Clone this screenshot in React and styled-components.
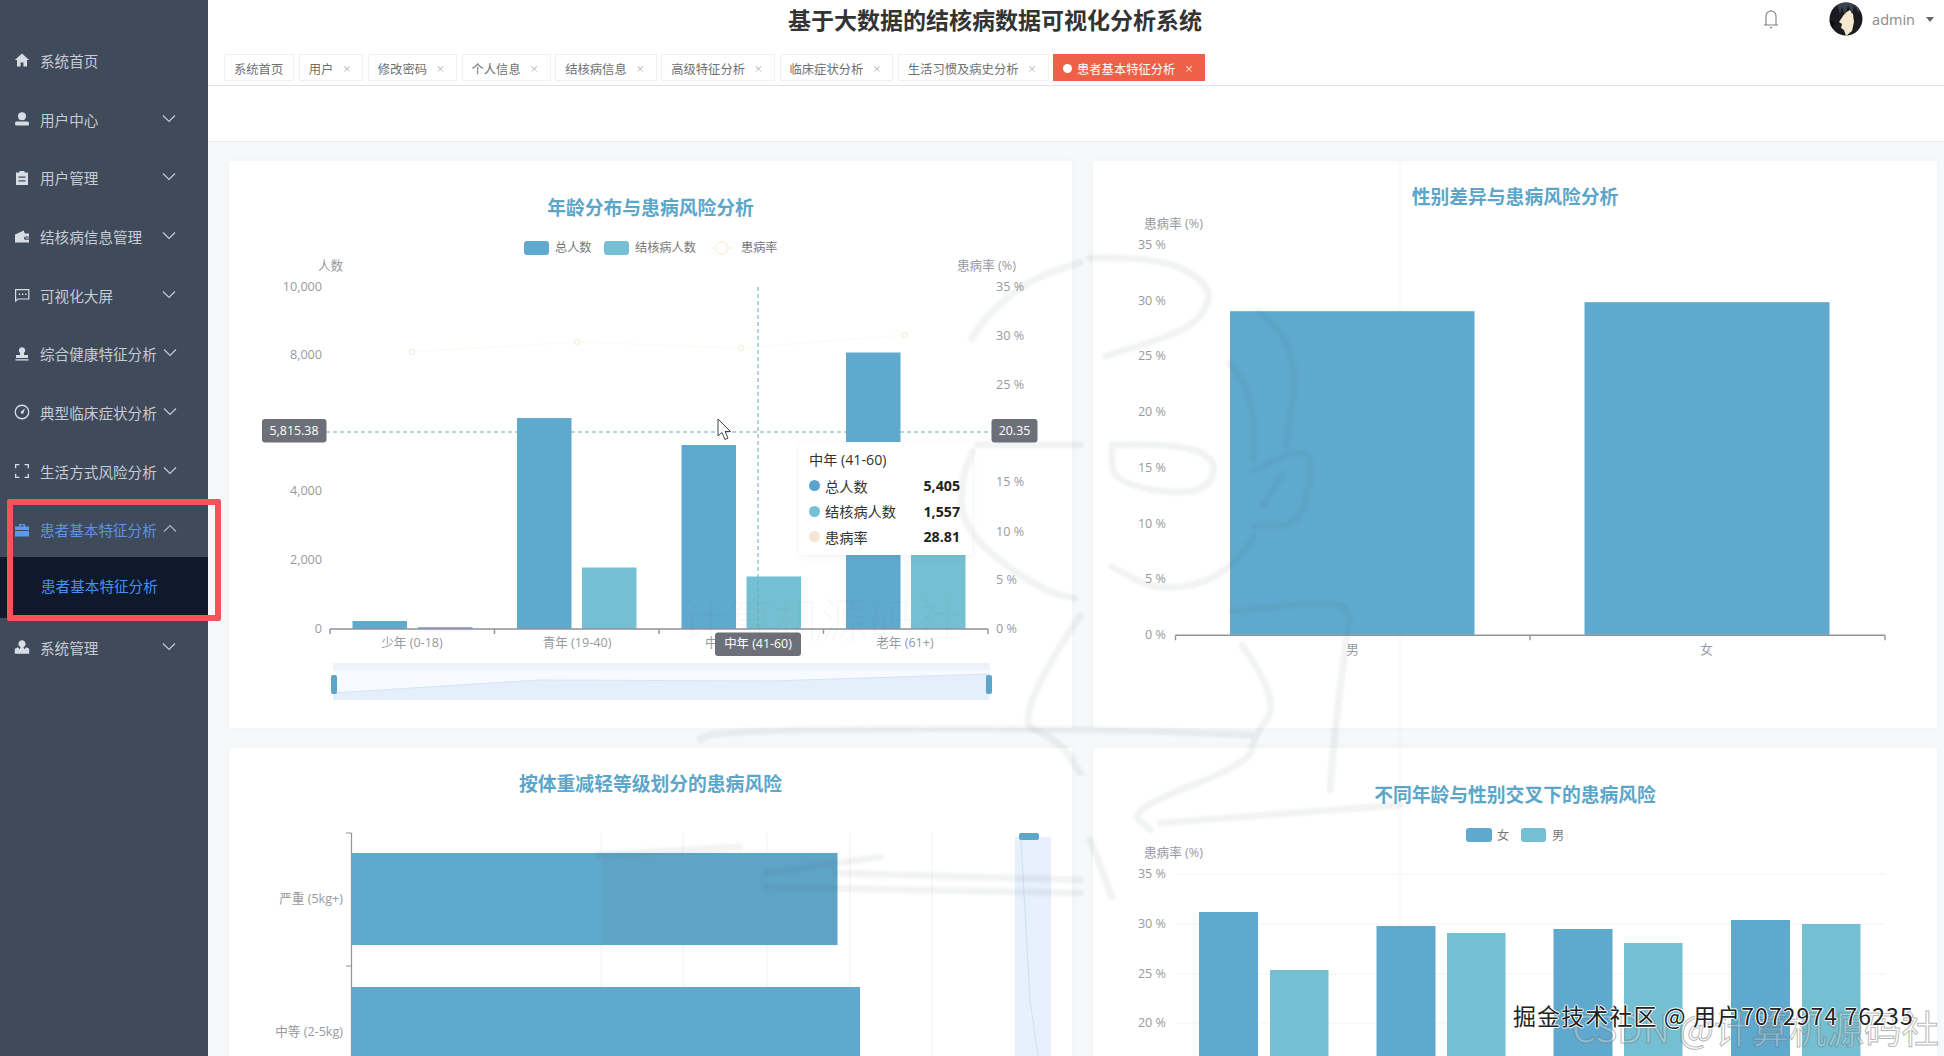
import React from 'react';
import styled, { createGlobalStyle } from 'styled-components';

const CJK = `"Noto Sans CJK SC", "Noto Sans", sans-serif`;
const LATIN = `"Open Sans", "Noto Sans CJK SC", sans-serif`;
const BLUE = '#5fa9cf';
const TEAL = '#75bfd2';
const AXIS = '#8f939a';
const LABEL = '#979a9f';

const Global = createGlobalStyle`
  html, body { margin: 0; padding: 0; background: #fff; }
  body { font-family: ${CJK}; }
  * { box-sizing: border-box; }
`;

const Page = styled.div`
  position: relative;
  display: flex;
  width: 1944px;
  height: 1056px;
  overflow: hidden;
  background: #fff;
`;

/* ---------- sidebar ---------- */
const Sidebar = styled.aside`
  flex: 0 0 208px;
  height: 100%;
  padding-top: 31px;
  background: #3f4a5b;
`;
const MenuItem = styled.div`
  display: flex;
  align-items: center;
  height: 58.7px;
  padding-left: 14px;
  font-size: 14.6px;
  color: ${p => (p.$active ? '#5f92e8' : '#c7ccd4')};
`;
const MenuIcon = styled.svg`
  flex: 0 0 16px;
  width: 16px;
  height: 16px;
  margin-right: 10px;
  fill: ${p => (p.$active ? '#5a9bf0' : '#d8dde4')};
`;
const MenuLabel = styled.span`
  flex: 0 0 112px;
  white-space: nowrap;
`;
const Chevron = styled.svg`
  width: 14px;
  height: 9px;
  margin-left: ${p => p.$gap}px;
  margin-top: -2px;
  fill: none;
  stroke: ${p => (p.$active ? '#aab4c2' : '#c7ccd4')};
  stroke-width: 1.2;
`;
const SubItem = styled.div`
  display: flex;
  align-items: center;
  height: 61.4px;
  margin-top: -2.7px;
  padding: 0 0 3px 41px;
  font-size: 14.6px;
  color: #4a8ef0;
  background: #0e1a2b;
`;

/* ---------- main column ---------- */
const Main = styled.main`
  flex: 1;
  min-width: 0;
  height: 100%;
  display: flex;
  flex-direction: column;
`;
const Header = styled.header`
  flex: 0 0 54px;
  display: flex;
  align-items: flex-start;
  padding-left: 580px;
`;
const Title = styled.h1`
  margin: 0;
  font-size: 23px;
  line-height: 39px;
  font-weight: 700;
  color: #333;
  white-space: nowrap;
`;
const UserBox = styled.div`
  margin-left: auto;
  display: flex;
  align-items: center;
  height: 38px;
  padding-right: 10px;
`;
const Bell = styled.svg`
  width: 18px;
  height: 20px;
  margin-right: 49px;
  fill: none;
  stroke: #7f7f7f;
  stroke-width: 1.1;
`;
const Avatar = styled.svg`
  width: 34px;
  height: 34px;
  margin-right: 9px;
`;
const UserName = styled.span`
  font-family: "Open Sans", sans-serif;
  font-size: 14.5px;
  color: #8a8a8a;
`;
const Caret = styled.span`
  width: 0;
  height: 0;
  margin-left: 11px;
  border-left: 4px solid transparent;
  border-right: 4px solid transparent;
  border-top: 5px solid #666;
`;
const TabBar = styled.nav`
  flex: 0 0 32px;
  display: flex;
  align-items: flex-start;
  gap: 4.5px;
  padding-left: 16px;
  border-bottom: 1px solid #e2e2e2;
`;
const Tab = styled.div`
  display: flex;
  align-items: center;
  height: 27px;
  padding: 2px ${p => (p.$plain ? 10 : 14)}px 0 9px;
  font-size: 12.3px;
  white-space: nowrap;
  color: ${p => (p.$active ? '#fff' : '#6f6f6f')};
  background: ${p => (p.$active ? '#ef6049' : '#fff')};
  border: 1px solid ${p => (p.$active ? '#ef6049' : '#f1f1f1')};
`;
const TabDot = styled.i`
  width: 9px;
  height: 9px;
  margin-right: 5px;
  border-radius: 50%;
  background: #fff;
`;
const TabClose = styled.span`
  width: 6px;
  margin-left: 9px;
  font-size: 9px;
  line-height: 1;
  color: ${p => (p.$active ? '#fff' : '#a8a8a8')};
`;
const Strip = styled.div`
  flex: 0 0 56px;
  border-bottom: 1px solid #ececec;
`;
const Content = styled.section`
  flex: 1;
  min-height: 0;
  overflow: hidden;
  display: grid;
  grid-template-columns: 843px 844px;
  grid-auto-rows: 567px;
  gap: 20px 21px;
  padding: 19px 0 0 21px;
  background: #f6f8f9;
`;
const Card = styled.article`
  position: relative;
  display: flex;
  flex-direction: column;
  background: #fff;
  box-shadow: 0 0 6px rgba(120, 130, 140, 0.06);
`;
const CardTitle = styled.h2`
  flex: none;
  margin: 0;
  padding-top: ${p => p.$top}px;
  font-size: 18.8px;
  line-height: 26px;
  font-weight: 700;
  text-align: center;
  color: #5ca6c9;
`;
const Chart = styled.svg`
  display: block;
  flex: 1;
  width: 100%;
  min-height: 0;
`;
const Tick = styled.text`
  font-family: ${LATIN};
  font-size: 12.6px;
  fill: ${LABEL};
`;
const LegendText = styled.text`
  font-family: ${CJK};
  font-size: 12.2px;
  fill: #777;
`;
const PointerText = styled.text`
  font-family: ${LATIN};
  font-size: 12.4px;
  fill: #fff;
`;

const Tooltip = styled.div`
  position: absolute;
  left: 570px;
  top: 281px;
  width: 173px;
  height: 113px;
  padding: 7px 12px 7px 10px;
  background: #fff;
  box-shadow: 0 2px 8px rgba(0, 0, 0, 0.05);
  color: #333;
  font-family: ${LATIN};
`;
const TipTitle = styled.div`
  font-size: 14.2px;
  line-height: 22px;
  margin-bottom: 2px;
`;
const TipRow = styled.div`
  display: flex;
  align-items: center;
  height: 25.5px;
  font-size: 14.2px;
`;
const TipDot = styled.i`
  width: 11px;
  height: 11px;
  margin-right: 5px;
  border-radius: 50%;
  background: ${p => p.$c};
`;
const TipValue = styled.b`
  margin-left: auto;
  font-weight: 700;
  color: #222;
`;

/* ---------- video watermarks over everything ---------- */
const Sketch = styled.svg`
  position: absolute;
  inset: 0;
  width: 1944px;
  height: 1056px;
  pointer-events: none;
  fill: none;
  stroke: #56625f;
  stroke-opacity: 0.075;
  stroke-width: 7;
  stroke-linejoin: round;
  stroke-linecap: round;
  filter: blur(1.2px);
`;
const RedFrame = styled.div`
  position: absolute;
  left: 7px;
  top: 499px;
  width: 214px;
  height: 122px;
  border: 6px solid #f6525a;
  border-radius: 2px;
  pointer-events: none;
`;
const GhostText = styled.div`
  position: absolute;
  left: 680px;
  top: 597px;
  font-size: 47px;
  line-height: 40px;
  font-weight: 300;
  color: rgba(60, 70, 70, 0.055);
  white-space: nowrap;
`;
const CsdnMark = styled.div`
  position: absolute;
  left: 1572px;
  top: 1002px;
  font-size: 37.5px;
  line-height: 50px;
  white-space: nowrap;
  color: rgba(255, 255, 255, 0.25);
  -webkit-text-stroke: 1px rgba(110, 110, 110, 0.5);
`;
const Subtitle = styled.div`
  position: absolute;
  left: 1513px;
  top: 998px;
  font-size: 23px;
  line-height: 34px;
  letter-spacing: 1.1px;
  white-space: nowrap;
  color: #222;
  text-shadow: 1px 0 0 #fff, -1px 0 0 #fff, 0 1px 0 #fff, 0 -1px 0 #fff;
`;

/* ---------- icons ---------- */
const icons = {
  home: <path d="M8 1.5 .8 8h2.2v6.5h3.6v-4h2.8v4H13V8h2.2z" />,
  user: <><circle cx="8" cy="5.2" r="4" /><rect x="1" y="10.6" width="14" height="4" rx="1.6" /></>,
  clip: <path fillRule="evenodd" d="M5.5 1h5v1.6H14v12.4H2V2.6h3.5zM4.5 6.6v1.2h7V6.6zm0 3.6v1.2h7v-1.2z" />,
  wallet: <path fillRule="evenodd" d="M1 6.4 9.8 2.6l1 3H15v3h-3.4a1.6 1.6 0 0 0 0 3.2H15V14.6H1zM11.6 9.4h3.4v1.2h-3.4z" />,
  chat: <path fillRule="evenodd" d="M1 2h14.4v10.6H4.4L1 15.2zm1.2 1.2v9.6l1.8-1.4h10.2V3.2zM4.8 6.6h1.4V8H4.8zm3.1 0h1.4V8H7.9zm3.1 0h1.4V8H11z" />,
  stamp: <path d="M8 1.2a3.2 3.2 0 0 1 2 5.7V9h4v3H2V9h4V6.9a3.2 3.2 0 0 1 2-5.7zM1.4 13.2h13.2v1.4H1.4z" />,
  gauge: <path fillRule="evenodd" d="M8 .6a7.4 7.4 0 1 1 0 14.8A7.4 7.4 0 0 1 8 .6zm0 1.3a6.1 6.1 0 1 0 0 12.2A6.1 6.1 0 0 0 8 1.9zm3 2.3-1.6 5a1.5 1.5 0 0 1-2.6-1.4z" />,
  full: <path d="M1 1h4.4v1.3H2.3v3H1zm9.6 0H15v4.3h-1.3v-3h-3.1zM1 10.7h1.3v3h3.1V15H1zm12.7 0H15V15h-4.4v-1.3h3.1z" />,
  case: <path fillRule="evenodd" d="M5 2h6v2.4h4V8H1V4.4h4zm1.3 1.2v1.2h3.4V3.2zM1 9h14v5.4H1z" />,
  admin: <path d="M8 1.2a3.6 3.6 0 0 1 2.6 6.1l-1.2 1 .9 2 1.9-2 3 1.4v5H.8v-5l3-1.4 1.9 2 .9-2-1.2-1A3.6 3.6 0 0 1 8 1.2z" />,
};

const menu = [
  { icon: 'home', label: '系统首页', leaf: true },
  { icon: 'user', label: '用户中心' },
  { icon: 'clip', label: '用户管理' },
  { icon: 'wallet', label: '结核病信息管理' },
  { icon: 'chat', label: '可视化大屏' },
  { icon: 'stamp', label: '综合健康特征分析' },
  { icon: 'gauge', label: '典型临床症状分析' },
  { icon: 'full', label: '生活方式风险分析' },
  { icon: 'case', label: '患者基本特征分析', active: true },
  { icon: 'admin', label: '系统管理' },
];
const tabs = ['用户', '修改密码', '个人信息', '结核病信息', '高级特征分析', '临床症状分析', '生活习惯及病史分析'];

const Menu = () => (
  <Sidebar>
    {menu.map(m => (
      <React.Fragment key={m.label}>
        <MenuItem $active={m.active}>
          <MenuIcon viewBox="0 0 16 16" $active={m.active}>{icons[m.icon]}</MenuIcon>
          <MenuLabel>{m.label}</MenuLabel>
          {!m.leaf && (
            <Chevron viewBox="0 0 14 9" $gap={m.label.length >= 8 ? 6 : 10} $active={m.active}>
              <path d={m.active ? 'M1 7.5 7 1.5l6 6' : 'M1 1.5l6 6 6-6'} />
            </Chevron>
          )}
        </MenuItem>
        {m.active && <SubItem>患者基本特征分析</SubItem>}
      </React.Fragment>
    ))}
  </Sidebar>
);

const Top = () => (
  <>
    <Header>
      <Title>基于大数据的结核病数据可视化分析系统</Title>
      <UserBox>
        <Bell viewBox="0 0 18 20">
          <path d="M2 16h14M4 16V7a5 5 0 0 1 10 0v9M8 18.6h2M9 1v1" />
        </Bell>
        <Avatar viewBox="0 0 34 34">
          <defs><clipPath id="av"><circle cx="17" cy="17" r="16.5" /></clipPath></defs>
          <g clipPath="url(#av)">
            <rect width="34" height="34" fill="#1b1a1f" />
            <path d="M16 11 21 8l3 4 1 8-2 9-6 5-2-6-3-2 1-4-3-2z" fill="#f6e8cf" />
            <path d="M8 2l3 10 2-7 3 8 3-10 4 9 2-9 5 8V0H8z" fill="#3b4150" />
            <path d="M0 18l6 3-3 7 6 6H0z" fill="#0d0d10" />
          </g>
        </Avatar>
        <UserName>admin</UserName>
        <Caret />
      </UserBox>
    </Header>
    <TabBar>
      <Tab $plain>系统首页</Tab>
      {tabs.map(t => (
        <Tab key={t}>{t}<TabClose>×</TabClose></Tab>
      ))}
      <Tab $active><TabDot />患者基本特征分析<TabClose $active>×</TabClose></Tab>
    </TabBar>
    <Strip />
  </>
);

const Bars = ({ items, base, color }) =>
  items.map(([x, w, top]) => <rect key={x} x={x} y={top} width={w} height={base - top} fill={color} />);

const AgeChart = () => {
  const left = [['10,000', 287], ['8,000', 355], ['4,000', 491], ['2,000', 560], ['0', 629]];
  const right = [['35 %', 287], ['30 %', 336], ['25 %', 385], ['15 %', 482], ['10 %', 532], ['5 %', 580], ['0 %', 629]];
  const cats = [['少年 (0-18)', 412], ['青年 (19-40)', 577], ['老年 (61+)', 905]];
  const line = [[412, 352], [577, 342], [741, 348], [905, 335]];
  const blue = [[352.5, 54.5, 621], [517, 54.5, 418], [681.5, 54.5, 445], [846, 54.5, 352.5]];
  const teal = [[418, 54.5, 627], [582, 54.5, 567.5], [746.5, 54.5, 576.5], [911, 54.5, 540]];
  return (
    <Chart viewBox="229 220 843 508" preserveAspectRatio="none">
      <rect x="524" y="241" width="25" height="14" rx="3" fill={BLUE} />
      <LegendText x="555" y="252">总人数</LegendText>
      <rect x="604" y="241" width="25" height="14" rx="3" fill={TEAL} />
      <LegendText x="635" y="252">结核病人数</LegendText>
      <path d="M710 248h24" stroke="#fbf8ee" strokeWidth="2" />
      <circle cx="722" cy="248" r="6" fill="#fff" stroke="#f8f4e6" strokeWidth="2" />
      <LegendText x="741" y="252">患病率</LegendText>

      <Tick x="318" y="270">人数</Tick>
      <Tick x="957" y="270">患病率 (%)</Tick>
      {left.map(([t, y]) => <Tick key={t} x="322" y={y + 4} textAnchor="end">{t}</Tick>)}
      {right.map(([t, y]) => <Tick key={t} x="996" y={y + 4}>{t}</Tick>)}
      {cats.map(([t, x]) => <Tick key={t} x={x} y="647" textAnchor="middle">{t}</Tick>)}
      <polyline points={line.map(p => p.join(',')).join(' ')} fill="none" stroke="#fdfbf4" strokeWidth="1.5" />
      {line.map(([x, y]) => <circle key={x} cx={x} cy={y} r="2.5" fill="#fff" stroke="#f8f3df" strokeWidth="1.5" />)}
      <Bars items={blue} base={629} color={BLUE} />
      <Bars items={teal} base={629} color={TEAL} />
      <path d="M330 629H988M330 629v5M494.5 629v5M659 629v5M823.5 629v5M988 629v5" stroke={AXIS} strokeWidth="1.4" fill="none" />

      <path d="M326 432H992" stroke="#66adb5" strokeDasharray="4 3" />
      <path d="M758 287V629" stroke="#66adb5" strokeDasharray="4 3" />
      <rect x="262" y="419" width="64.5" height="23.5" rx="3" fill="#6e7079" />
      <PointerText x="294" y="435" textAnchor="middle">5,815.38</PointerText>
      <rect x="991.5" y="419" width="46" height="23.5" rx="3" fill="#6e7079" />
      <PointerText x="1014.5" y="435" textAnchor="middle">20.35</PointerText>
      <Tick x="705" y="647">中</Tick>
      <rect x="715" y="632.5" width="86" height="23.5" rx="3" fill="#6e7079" />
      <PointerText x="758" y="648" textAnchor="middle">中年 (41-60)</PointerText>

      <rect x="333" y="663" width="657" height="7" fill="#eef3fb" />
      <rect x="333" y="670" width="657" height="30" fill="#f7fafe" />
      <path d="M333 693 539 680 772 681 989 674V700H333z" fill="#e4effb" />
      <path d="M333 693 539 680 772 681 989 674" fill="none" stroke="#d5e3f5" />
      <rect x="331" y="675" width="6" height="19" rx="2" fill="#5da6c9" />
      <rect x="986" y="675" width="6" height="19" rx="2" fill="#5da6c9" />
      <path d="M718 419v17l4-3.500 3 7 3-1.300-3-6.700h5.500z" fill="#fff" stroke="#444" strokeWidth="1" />
    </Chart>
  );
};

const GenderChart = () => {
  const ticks = [['35 %', 245], ['30 %', 301], ['25 %', 356], ['20 %', 412], ['15 %', 467], ['10 %', 523], ['5 %', 578], ['0 %', 634]];
  return (
    <Chart viewBox="1093 209 844 518" preserveAspectRatio="none">
      <Tick x="1144" y="228">患病率 (%)</Tick>
      {ticks.map(([t, y]) => <Tick key={t} x="1166" y={y + 4} textAnchor="end">{t}</Tick>)}
      <rect x="1230" y="311" width="244.500" height="323" fill={BLUE} />
      <rect x="1584.500" y="302" width="245" height="332" fill={BLUE} />
      <path d="M1175.500 634.500H1885M1175.500 634.500v5M1530 634.500v5M1885 634.500v5" stroke={AXIS} strokeWidth="1.4" fill="none" />
      <Tick x="1352.500" y="653" textAnchor="middle">男</Tick>
      <Tick x="1706.500" y="653" textAnchor="middle">女</Tick>
    </Chart>
  );
};

const WeightChart = () => (
  <Chart viewBox="229 796 843 519" preserveAspectRatio="none">
    {[601, 683, 767, 850, 932].map(x => <path key={x} d={`M${x} 833V1300`} stroke="#f2f2f2" />)}
    <rect x="351.500" y="853" width="486" height="92" fill={BLUE} />
    <rect x="351.500" y="987" width="508.500" height="100" fill={BLUE} />
    <path d="M351.500 833V1100M346 833h5.500M346 966h5.500" stroke={AXIS} strokeWidth="1.2" fill="none" />
    <Tick x="343" y="903" textAnchor="end">严重 (5kg+)</Tick>
    <Tick x="343" y="1036" textAnchor="end">中等 (2-5kg)</Tick>
    <rect x="1015" y="837" width="36" height="230" fill="#e7f0fc" />
    <path d="M1021 840 1030 1000 1040 1070" fill="none" stroke="#cfe0f5" />
    <rect x="1019" y="833" width="20" height="7" rx="2" fill="#5da6c9" />
  </Chart>
);

const CrossChart = () => {
  const ticks = [['35 %', 874], ['30 %', 924], ['25 %', 974], ['20 %', 1023]];
  const f = [[1199, 912], [1376.500, 926], [1553.500, 929], [1731, 920]];
  const m = [[1270, 970], [1447, 933], [1624, 943], [1802, 924]];
  return (
    <Chart viewBox="1093 807 844 508" preserveAspectRatio="none">
      <rect x="1466" y="828" width="26" height="14" rx="3" fill={BLUE} />
      <LegendText x="1497" y="840">女</LegendText>
      <rect x="1521" y="828" width="25" height="14" rx="3" fill={TEAL} />
      <LegendText x="1552" y="840">男</LegendText>
      <Tick x="1144" y="857">患病率 (%)</Tick>
      {ticks.map(([t, y]) => <path key={t} d={`M1176 ${y}H1885`} stroke="#f3f3f3" />)}
      {ticks.map(([t, y]) => <Tick key={t} x="1166" y={y + 4} textAnchor="end">{t}</Tick>)}
      {f.map(([x, top]) => <rect key={x} x={x} y={top} width="59" height={1300 - top} fill={BLUE} />)}
      {m.map(([x, top]) => <rect key={x} x={x} y={top} width="58.500" height={1300 - top} fill={TEAL} />)}
    </Chart>
  );
};

const strokes = [
  [[1080, 263], [1037, 274], [989, 313], [972, 338]],
  [[1090, 258], [1161, 256], [1212, 286], [1204, 315], [1177, 334], [1106, 356]],
  [[1259, 312], [1283, 330], [1297, 375], [1286, 445]],
  [[1229, 363], [1253, 389], [1253, 460]],
  [[1253, 471], [1302, 445], [1313, 467], [1300, 526], [1256, 526]],
  [[1283, 474], [1264, 504]],
  [[1253, 537], [1232, 574], [1161, 593], [1112, 567]],
  [[1112, 445], [1215, 441], [1212, 497], [1112, 485], [1112, 445]],
  [[1232, 611], [1330, 600], [1351, 611], [1346, 641], [1335, 730], [1330, 790]],
  [[1242, 645], [1281, 700], [1253, 737], [1250, 763], [1128, 810], [1150, 830]],
  [[972, 452], [956, 491], [972, 541], [1043, 591], [1075, 598]],
  [[978, 445], [1080, 445]],
  [[1080, 616], [1010, 720], [1059, 740], [1080, 773]],
  [[1161, 823], [1400, 805]],
  [[1090, 840], [1112, 897]],
  [[598, 855], [739, 847]],
  [[766, 873], [880, 857]],
  [[766, 887], [1080, 893]],
  [[837, 873], [1080, 880]],
  [[701, 740], [690, 730], [1072, 728], [1250, 735]],
];

/* rounds a hand-drawn polyline through the midpoints of its segments */
const smooth = pts => {
  let d = `M${pts[0][0]} ${pts[0][1]}`;
  for (let i = 1; i < pts.length - 1; i++) {
    const mx = (pts[i][0] + pts[i + 1][0]) / 2;
    const my = (pts[i][1] + pts[i + 1][1]) / 2;
    d += `Q${pts[i][0]} ${pts[i][1]} ${mx} ${my}`;
  }
  const last = pts[pts.length - 1];
  return `${d}L${last[0]} ${last[1]}`;
};

const App = () => (
  <Page>
    <Global />
    <Menu />
    <Main>
      <Top />
      <Content>
        <Card>
          <CardTitle $top={33}>年龄分布与患病风险分析</CardTitle>
          <AgeChart />
          <Tooltip>
            <TipTitle>中年 (41-60)</TipTitle>
            <TipRow><TipDot $c="#5ba3cf" />总人数<TipValue>5,405</TipValue></TipRow>
            <TipRow><TipDot $c="#75c1d2" />结核病人数<TipValue>1,557</TipValue></TipRow>
            <TipRow><TipDot $c="#f5e7d6" />患病率<TipValue>28.81</TipValue></TipRow>
          </Tooltip>
        </Card>
        <Card>
          <CardTitle $top={22}>性别差异与患病风险分析</CardTitle>
          <GenderChart />
        </Card>
        <Card>
          <CardTitle $top={22}>按体重减轻等级划分的患病风险</CardTitle>
          <WeightChart />
        </Card>
        <Card>
          <CardTitle $top={33}>不同年龄与性别交叉下的患病风险</CardTitle>
          <CrossChart />
        </Card>
      </Content>
    </Main>
    <RedFrame />
    <GhostText>计算机源码社</GhostText>
    <Sketch viewBox="0 0 1944 1056">
      {strokes.map(s => <path key={s.join()} d={smooth(s)} />)}
      <path d="M1400 160V1000" strokeWidth="1" />
      <rect x="601" y="853" width="236" height="92" fill="#56625f" fillOpacity="0.07" stroke="none" />
    </Sketch>
    <CsdnMark>CSDN @计算机源码社</CsdnMark>
    <Subtitle>掘金技术社区 @ 用户7072974 76235</Subtitle>
  </Page>
);

export default App;
